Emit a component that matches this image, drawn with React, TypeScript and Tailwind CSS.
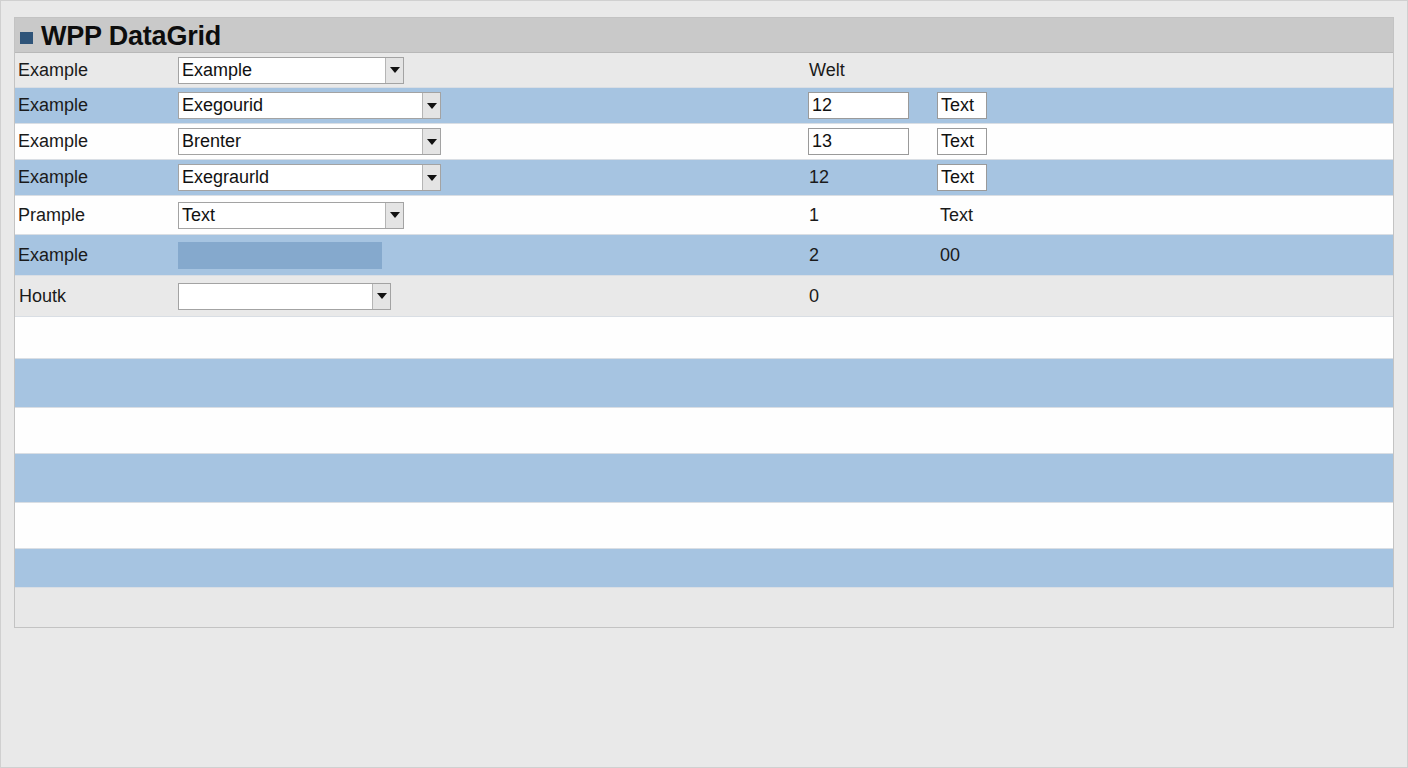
import type { ReactNode } from "react"

type Tone = "gray" | "blue" | "white"

const toneClass: Record<Tone, string> = {
  gray: "bg-[#e9e9e9]",
  blue: "bg-[#a6c4e1]",
  white: "bg-[#fefefe]",
}

function Select({ value, width }: { value: string; width: string }) {
  return (
    <div className={`flex h-[27px] ${width} border border-[#a3a3a3] bg-white`}>
      <span className="flex-1 pl-[3px] leading-[25px] text-[#111]">{value}</span>
      <span className="flex w-[18px] items-center justify-center border-l border-[#b5b5b5] bg-[#e4e4e4]">
        <svg width="10" height="6" viewBox="0 0 10 6">
          <path d="M0 0h10L5 6z" fill="#111" />
        </svg>
      </span>
    </div>
  )
}

function Input({ value, width }: { value: string; width: string }) {
  return (
    <div className={`h-[27px] ${width} border border-[#9a9a9a] bg-white pl-[3px] leading-[25px] text-[#111]`}>
      {value}
    </div>
  )
}

// plain cell text, nudged to line up with the text inside the boxes
function Txt({ children, pad = "pl-px" }: { children: ReactNode; pad?: string }) {
  return <span className={pad}>{children}</span>
}

function Row({
  tone,
  h,
  cells,
}: {
  tone: Tone
  h: string
  cells?: [ReactNode, ReactNode, ReactNode, ReactNode]
}) {
  return (
    <div
      className={`grid grid-cols-[163px_630px_129px_1fr] items-center border-b border-[#d9dee4] ${toneClass[tone]} ${h}`}
    >
      {cells && (
        <>
          <div className="pl-[3px]">{cells[0]}</div>
          <div>{cells[1]}</div>
          <div>{cells[2]}</div>
          <div>{cells[3]}</div>
        </>
      )}
    </div>
  )
}

export default function App() {
  return (
    <div
      className="h-[768px] w-[1408px] border border-[#d0d0d0] bg-[#e9e9e9] px-[13px] pt-[16px] text-[18px] text-[#1a1a1a]"
      style={{ fontFamily: '"Liberation Sans", Arial, sans-serif' }}
    >
      <div className="border border-[#c3c3c3]">
        <div className="flex h-[35px] items-center border-b border-[#b8b8b8] bg-[#c9c9c9] pl-[5px] pt-[3px]">
          <span className="mr-[8px] mt-[2px] h-[12px] w-[13px] bg-[#2f5479]" />
          <span className="text-[27px] font-bold tracking-[-0.2px] text-[#0d0d0d]">WPP DataGrid</span>
        </div>

        <Row
          tone="gray"
          h="h-[35px]"
          cells={["Example", <Select value="Example" width="w-[226px]" />, <Txt>Welt</Txt>, null]}
        />
        <Row
          tone="blue"
          h="h-[36px]"
          cells={[
            "Example",
            <Select value="Exegourid" width="w-[263px]" />,
            <Input value="12" width="w-[101px]" />,
            <Input value="Text" width="w-[50px]" />,
          ]}
        />
        <Row
          tone="white"
          h="h-[36px]"
          cells={[
            "Example",
            <Select value="Brenter" width="w-[263px]" />,
            <Input value="13" width="w-[101px]" />,
            <Input value="Text" width="w-[50px]" />,
          ]}
        />
        <Row
          tone="blue"
          h="h-[36px]"
          cells={[
            "Example",
            <Select value="Exegraurld" width="w-[263px]" />,
            <Txt>12</Txt>,
            <Input value="Text" width="w-[50px]" />,
          ]}
        />
        <Row
          tone="white"
          h="h-[39px]"
          cells={["Prample", <Select value="Text" width="w-[226px]" />, <Txt>1</Txt>, <Txt pad="pl-[3px]">Text</Txt>]}
        />
        <Row
          tone="blue"
          h="h-[41px]"
          cells={[
            "Example",
            <div className="h-[27px] w-[204px] bg-[#85a9cd]" />,
            <Txt>2</Txt>,
            <Txt pad="pl-[3px]">00</Txt>,
          ]}
        />
        <Row
          tone="gray"
          h="h-[41px]"
          cells={[<span className="pl-px">Houtk</span>, <Select value="" width="w-[213px]" />, <Txt>0</Txt>, null]}
        />
        <Row tone="white" h="h-[42px]" />
        <Row tone="blue" h="h-[49px]" />
        <Row tone="white" h="h-[46px]" />
        <Row tone="blue" h="h-[49px]" />
        <Row tone="white" h="h-[46px]" />
        <Row tone="blue" h="h-[39px]" />
        <div className="h-[39px] bg-[#e8e8e8]" />
      </div>
    </div>
  )
}
